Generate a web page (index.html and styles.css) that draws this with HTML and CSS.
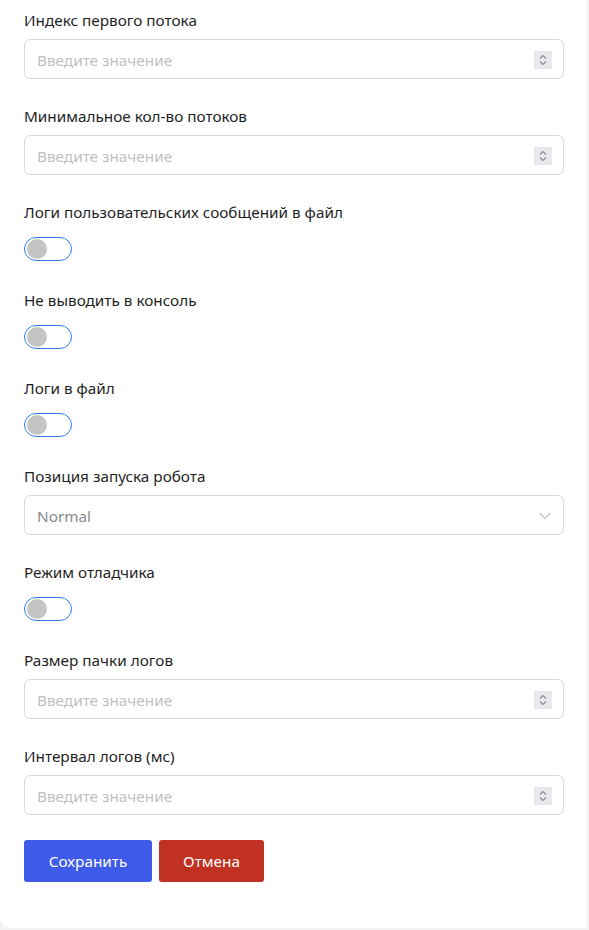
FILE: index.html
```html
<!DOCTYPE html>
<html lang="ru">
<head>
<meta charset="utf-8">
<link rel="stylesheet" href="styles.css">
</head>
<body>
<div class="card">
  <form class="form">
    <div class="field">
      <label class="label">Индекс первого потока</label>
      <div class="input">
        <span class="placeholder">Введите значение</span>
        <span class="spin"><svg width="18" height="18" viewBox="0 0 18 18"><path d="M6 7.5 L9 4.5 L12 7.5 M6 10.5 L9 13.5 L12 10.5" fill="none" stroke="#85858c" stroke-width="1.1"/></svg></span>
      </div>
    </div>
    <div class="field">
      <label class="label">Минимальное кол-во потоков</label>
      <div class="input">
        <span class="placeholder">Введите значение</span>
        <span class="spin"><svg width="18" height="18" viewBox="0 0 18 18"><path d="M6 7.5 L9 4.5 L12 7.5 M6 10.5 L9 13.5 L12 10.5" fill="none" stroke="#85858c" stroke-width="1.1"/></svg></span>
      </div>
    </div>
    <div class="field field-toggle">
      <label class="label">Логи пользовательских сообщений в файл</label>
      <span class="toggle"><span class="knob"></span></span>
    </div>
    <div class="field field-toggle">
      <label class="label">Не выводить в консоль</label>
      <span class="toggle"><span class="knob"></span></span>
    </div>
    <div class="field field-toggle">
      <label class="label">Логи в файл</label>
      <span class="toggle"><span class="knob"></span></span>
    </div>
    <div class="field">
      <label class="label">Позиция запуска робота</label>
      <div class="input">
        <span class="value">Normal</span>
        <svg class="chev" width="12" height="8" viewBox="0 0 12 8"><path d="M0.5 1 L6 6.5 L11.5 1" fill="none" stroke="#bdbdbd" stroke-width="1.1"/></svg>
      </div>
    </div>
    <div class="field field-toggle">
      <label class="label">Режим отладчика</label>
      <span class="toggle"><span class="knob"></span></span>
    </div>
    <div class="field">
      <label class="label">Размер пачки логов</label>
      <div class="input">
        <span class="placeholder">Введите значение</span>
        <span class="spin"><svg width="18" height="18" viewBox="0 0 18 18"><path d="M6 7.5 L9 4.5 L12 7.5 M6 10.5 L9 13.5 L12 10.5" fill="none" stroke="#85858c" stroke-width="1.1"/></svg></span>
      </div>
    </div>
    <div class="field field-last">
      <label class="label">Интервал логов (мс)</label>
      <div class="input">
        <span class="placeholder">Введите значение</span>
        <span class="spin"><svg width="18" height="18" viewBox="0 0 18 18"><path d="M6 7.5 L9 4.5 L12 7.5 M6 10.5 L9 13.5 L12 10.5" fill="none" stroke="#85858c" stroke-width="1.1"/></svg></span>
      </div>
    </div>
    <div class="actions">
      <button type="button" class="btn btn-save">Сохранить</button>
      <button type="button" class="btn btn-cancel">Отмена</button>
    </div>
  </form>
</div>
</body>
</html>
```
FILE: styles.css
```css
* { box-sizing: border-box; }
html, body { margin: 0; padding: 0; }
body {
  background: #f2f2f2;
  font-family: "Noto Sans", "Open Sans", sans-serif;
  color: #1f1f1f;
}
.card {
  width: 587px;
  height: 928px;
  background: #ffffff;
  border-bottom-left-radius: 10px;
  border-bottom-right-radius: 4px;
  padding: 9px 23px 0 24px;
}
.form { display: flex; flex-direction: column; }
.field { display: flex; flex-direction: column; margin-bottom: 26px; }
.field-toggle { margin-bottom: 28px; }
.field-last { margin-bottom: 25px; }
.label {
  font-size: 15.3px;
  line-height: 22px;
  color: #1f1f1f;
  margin-bottom: 8px;
}
.field-toggle .label { margin-bottom: 14px; }
.input {
  height: 40px;
  border: 1px solid #d9d9d9;
  border-radius: 6px;
  display: flex;
  align-items: center;
  justify-content: space-between;
  padding: 1px 11px 0 12px;
}
.placeholder { font-size: 15.3px; color: #bfbfbf; }
.value { font-size: 15.3px; color: #8a8a8a; }
.spin {
  width: 18px; height: 18px;
  background: #e9e9ed;
  display: flex;
}
.chev { margin-right: 1px; }
.toggle {
  width: 48px; height: 24px;
  border: 1.5px solid #2b7cf6;
  border-radius: 12px;
  background: #fff;
  display: flex;
  align-items: center;
  padding-left: 1.5px;
}
.knob {
  width: 20px; height: 20px;
  border-radius: 50%;
  background: #c4c4c4;
}
.actions { display: flex; gap: 7px; }
.btn {
  height: 42px;
  border: none;
  border-radius: 3px;
  color: #fff;
  font-family: inherit;
  font-size: 15.3px;
}
.btn-save { width: 128px; background: #3d5be8; }
.btn-cancel { width: 105px; background: #c03122; }
```
